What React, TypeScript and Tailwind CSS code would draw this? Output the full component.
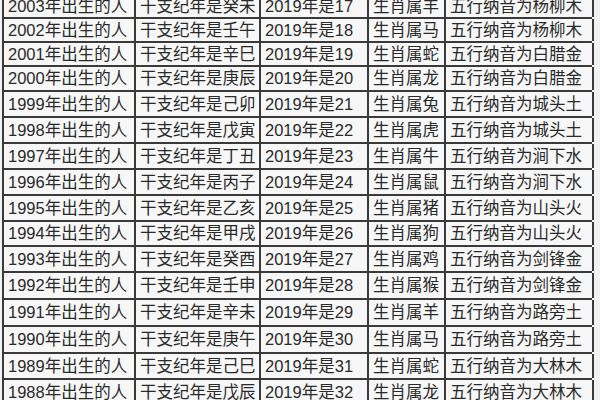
const rows = [
  { year: '2003', gz: '癸未', age: '17', sx: '羊', wx: '杨柳木', h: 'h-[23px]' },
  { year: '2002', gz: '壬午', age: '18', sx: '马', wx: '杨柳木', h: 'h-[24px]' },
  { year: '2001', gz: '辛巳', age: '19', sx: '蛇', wx: '白腊金', h: 'h-[24px]' },
  { year: '2000', gz: '庚辰', age: '20', sx: '龙', wx: '白腊金', h: 'h-[25px]' },
  { year: '1999', gz: '己卯', age: '21', sx: '兔', wx: '城头土', h: 'h-[26px]' },
  { year: '1998', gz: '戊寅', age: '22', sx: '虎', wx: '城头土', h: 'h-[26px]' },
  { year: '1997', gz: '丁丑', age: '23', sx: '牛', wx: '涧下水', h: 'h-[26px]' },
  { year: '1996', gz: '丙子', age: '24', sx: '鼠', wx: '涧下水', h: 'h-[26px]' },
  { year: '1995', gz: '乙亥', age: '25', sx: '猪', wx: '山头火', h: 'h-[26px]' },
  { year: '1994', gz: '甲戌', age: '26', sx: '狗', wx: '山头火', h: 'h-[25px]' },
  { year: '1993', gz: '癸酉', age: '27', sx: '鸡', wx: '剑锋金', h: 'h-[26px]' },
  { year: '1992', gz: '壬申', age: '28', sx: '猴', wx: '剑锋金', h: 'h-[27px]' },
  { year: '1991', gz: '辛未', age: '29', sx: '羊', wx: '路旁土', h: 'h-[27px]' },
  { year: '1990', gz: '庚午', age: '30', sx: '马', wx: '路旁土', h: 'h-[27px]' },
  { year: '1989', gz: '己巳', age: '31', sx: '蛇', wx: '大林木', h: 'h-[26px]' },
  { year: '1988', gz: '戊辰', age: '32', sx: '龙', wx: '大林木', h: 'h-[26px]' },
];

const cell = 'flex items-center border-r-2 border-[#3a3a3a] pl-[4px] whitespace-nowrap overflow-hidden';

export default function App() {
  return (
    <div className="w-[600px] h-[400px] overflow-hidden bg-[#f2f2f2] pl-[2px]">
      <div
        className="-mt-[4px] w-[590px] border-l-2 border-[#3a3a3a] bg-[#f7f7f7] text-[16.5px] leading-none text-[#2a2a2a]"
        style={{ fontFamily: '"Liberation Sans", "Noto Sans CJK SC", sans-serif' }}
      >
        {rows.map((r) => (
          <div
            key={r.year}
            className={`grid grid-cols-[132px_125px_108px_77px_148px] border-b-2 border-[#3a3a3a] ${r.h}`}
          >
            <div className={cell}>{r.year}年出生的人</div>
            <div className={cell}>干支纪年是{r.gz}</div>
            <div className={cell}>2019年是{r.age}</div>
            <div className={cell}>生肖属{r.sx}</div>
            <div className={cell}>五行纳音为{r.wx}</div>
          </div>
        ))}
      </div>
    </div>
  );
}
